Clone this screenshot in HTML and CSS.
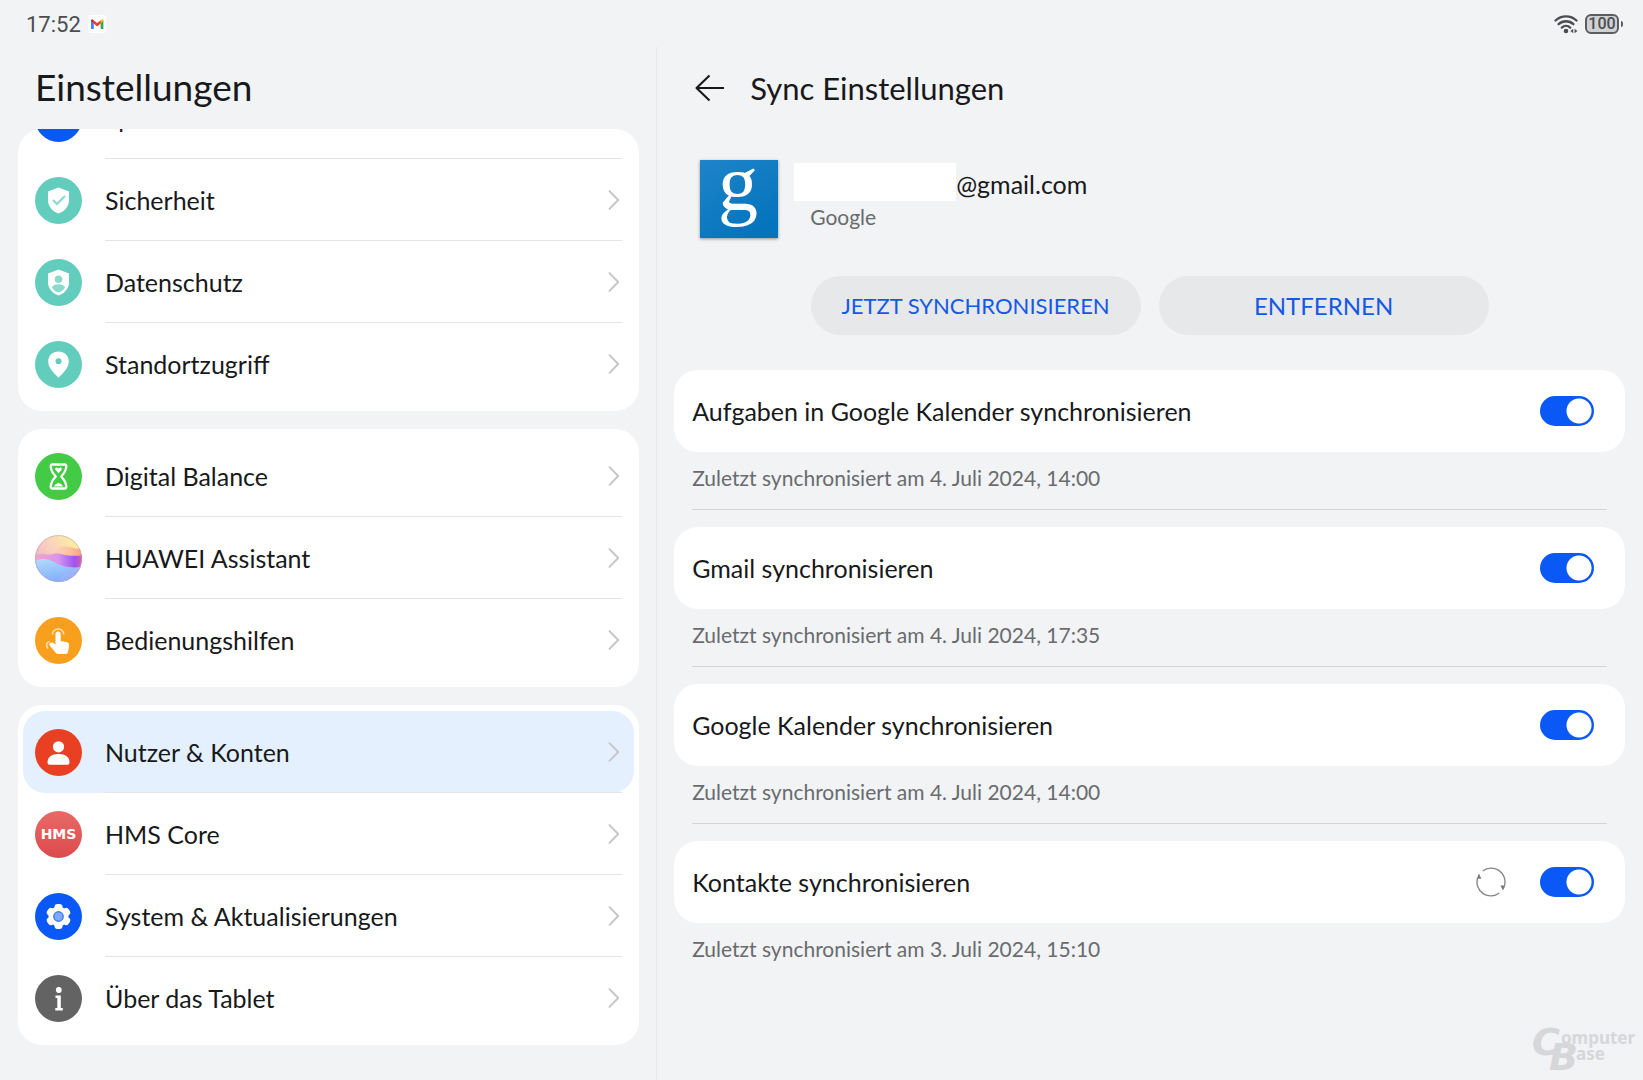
FILE: index.html
```html
<!DOCTYPE html>
<html lang="de">
<head>
<meta charset="utf-8">
<meta name="viewport" content="width=device-width, initial-scale=1">
<title>Einstellungen</title>
<link rel="stylesheet" href="styles.css">
</head>
<body>
<svg class="defs" width="0" height="0" aria-hidden="true">
  <symbol id="chevron" viewBox="0 0 12 20"><path d="M1.500 1.200 10.200 10 1.500 18.800" fill="none" stroke="#c4c6c8" stroke-width="1.900" stroke-linecap="round" stroke-linejoin="round"/></symbol>
</svg>

<header class="status">
  <div class="status-side">
    <time>17:52</time>
    <svg class="gmail" viewBox="0 0 18 18" aria-label="Gmail">
      <rect width="18" height="18" rx="3" fill="#fff"/>
      <path d="M3 5v9h2.800V7.200z" fill="#4285f4"/>
      <path d="M15.400 5v9h-2.800V7.200z" fill="#34a853"/>
      <path d="M12.600 5.400 14 4.200q1.400-.2 1.400 1.500l-2.800 2.800z" fill="#fbbc04"/>
      <path d="M5.800 5.400 4.400 4.200Q3 4 3 5.700l2.800 2.800z" fill="#c5221f"/>
      <path d="M5.600 5.200 9.200 8l3.600-2.800v3.300L9.200 11.400 5.600 8.500z" fill="#ea4335"/>
    </svg>
  </div>
  <div class="status-side">
    <svg class="wifi" viewBox="0 0 24 20" aria-label="WLAN">
      <g fill="none" stroke="#4b4d50" stroke-width="2.300" stroke-linecap="round">
        <path d="M1.500 6.500a15.500 15.500 0 0 1 21 0"/>
        <path d="M4.600 10.200a10.800 10.800 0 0 1 14.800 0"/>
        <path d="M7.800 13.600a6.200 6.200 0 0 1 8.400 0"/>
      </g>
      <circle cx="12" cy="17" r="2.300" fill="#4b4d50"/>
      <path d="m16.500 17 2.700-2.300v4.600zM23.300 17l-2.700-2.300v4.600z" fill="#4b4d50"/>
    </svg>
    <div class="battery"><span>100</span></div>
  </div>
</header>

<div class="panes">
  <nav class="side" aria-label="Einstellungen">
    <h1>Einstellungen</h1>
    <ul class="card">
      <li class="clipped"><a class="row" href="#"><span class="dot blue"></span><span class="row-body">Speicher</span></a></li>
      <li><a class="row" href="#">
        <svg class="icon" viewBox="0 0 47 47"><circle cx="23.500" cy="23.500" r="23.500" fill="#62cdbd"/><path d="M23.500 10.500 34 14.500V23c0 6.500-4.300 11.300-10.500 13.500C17.300 34.300 13 29.500 13 23v-8.500z" fill="#fff"/><path d="m18 23 4 4 8-8" fill="none" stroke="#8adacd" stroke-width="2.200"/></svg>
        <span class="row-body">Sicherheit<svg class="chev"><use href="#chevron"/></svg></span></a></li>
      <li><a class="row" href="#">
        <svg class="icon" viewBox="0 0 47 47"><circle cx="23.500" cy="23.500" r="23.500" fill="#62cdbd"/><path d="M23.500 10.500 34 14.500V23c0 6.500-4.300 11.300-10.500 13.500C17.300 34.300 13 29.500 13 23v-8.500z" fill="#fff"/><circle cx="23.500" cy="20.300" r="3.800" fill="#8adacd"/><path d="M17 28.600c1.300-4.400 11.700-4.400 13 0q-2.200 4-6.500 5-4.300-1-6.500-5z" fill="#8adacd"/></svg>
        <span class="row-body">Datenschutz<svg class="chev"><use href="#chevron"/></svg></span></a></li>
      <li><a class="row" href="#">
        <svg class="icon" viewBox="0 0 47 47"><circle cx="23.500" cy="23.500" r="23.500" fill="#62cdbd"/><path d="M23.500 10.500c6 0 10.300 4.300 10.300 10 0 6.200-5.300 11-10.300 16.300-5-5.300-10.300-10.100-10.300-16.300 0-5.700 4.300-10 10.300-10z" fill="#fff"/><circle cx="23.500" cy="20.300" r="3" fill="#62cdbd"/></svg>
        <span class="row-body">Standortzugriff<svg class="chev"><use href="#chevron"/></svg></span></a></li>
    </ul>
    <ul class="card">
      <li><a class="row" href="#">
        <svg class="icon" viewBox="0 0 47 47"><circle cx="23.500" cy="23.500" r="23.500" fill="#43cb46"/><path d="M17.500 11.500h12q2 0 1.800 2c-.4 5-2.300 7-5 10 2.700 3 4.600 5 5 10q.2 2-1.800 2h-12q-2 0-1.800-2c.4-5 2.300-7 5-10-2.700-3-4.600-5-5-10q-.2-2 1.800-2z" fill="none" stroke="#fff" stroke-width="2.300" stroke-linejoin="round"/><path d="m23.500 20.300-3.200-3.500q-.6-2.400 1.500-2.300l1.700 1 1.700-1q2.100-.1 1.500 2.300zM18.800 33.500q.8-2 4.700-3.800 3.900 1.800 4.700 3.800z" fill="#fff"/></svg>
        <span class="row-body">Digital Balance<svg class="chev"><use href="#chevron"/></svg></span></a></li>
      <li><a class="row" href="#">
        <svg class="icon" viewBox="0 0 47 47">
          <defs>
            <clipPath id="orb"><circle cx="23.500" cy="23.500" r="23.500"/></clipPath>
            <linearGradient id="sky" x1="0" y1=".6" x2=".8" y2="0"><stop offset="0" stop-color="#f5b3c6"/><stop offset=".5" stop-color="#fad2bd"/><stop offset="1" stop-color="#fdf09c"/></linearGradient>
            <linearGradient id="peach" x1="0" x2="1"><stop offset="0" stop-color="#fbd7cf" stop-opacity=".2"/><stop offset="1" stop-color="#fb9f7c"/></linearGradient>
            <linearGradient id="violet" x1="0" x2="1"><stop offset="0" stop-color="#f2a5c8"/><stop offset=".5" stop-color="#d794ee"/><stop offset=".85" stop-color="#9a55ee"/><stop offset="1" stop-color="#dd5fa8"/></linearGradient>
            <linearGradient id="sea" x1="0" y1="0" x2=".4" y2="1"><stop offset="0" stop-color="#b4dcfb"/><stop offset="1" stop-color="#7fb0fb"/></linearGradient>
          </defs>
          <g clip-path="url(#orb)">
            <rect width="47" height="47" fill="url(#sky)"/>
            <path d="M12 22C21 18 21 11 30 11.500s11 4 17 1V26H12z" fill="url(#peach)"/>
            <path d="M0 20c8-3 12 1 18-1 8-2 14 4 29 1v16H0z" fill="url(#violet)"/>
            <path d="M0 25.500c8-3 14-1.500 20 2s14 6 27 4.500v15H0z" fill="url(#sea)"/>
            <path d="M24 47c2-8 8-14 23-15v15z" fill="#a9b2fb" opacity=".5"/>
          </g>
          <circle cx="23.500" cy="23.500" r="23" fill="none" stroke="#b6a5c8" stroke-opacity=".6"/>
        </svg>
        <span class="row-body">HUAWEI Assistant<svg class="chev"><use href="#chevron"/></svg></span></a></li>
      <li><a class="row" href="#">
        <svg class="icon" viewBox="0 0 47 47"><circle cx="23.500" cy="23.500" r="23.500" fill="#f8a01d"/><path d="M20.500 17q0-2.600 2.600-2.600t2.600 2.600v7l6.300 1.200q2.300.5 2.100 2.800l-1 6.500q-.5 2.500-2.800 2.500h-6.800q-1.800 0-3-1.500l-6-7.300q-.8-1.200.4-2.200 1.500-1 3-.2l2.600 1.700z" fill="#fff"/><path d="M17.400 17.600a5.700 5.700 0 1 1 11.400 0M14.500 24.500q-3.500 1.200-2.800 4.800 .3 1.200 1.300 2.300" fill="none" stroke="#fde0b3" stroke-width="1.500"/></svg>
        <span class="row-body">Bedienungshilfen<svg class="chev"><use href="#chevron"/></svg></span></a></li>
    </ul>
    <ul class="card">
      <li><a class="row current" href="#" aria-current="page">
        <svg class="icon" viewBox="0 0 47 47"><circle cx="23.500" cy="23.500" r="23.500" fill="#e94023"/><circle cx="23.500" cy="17.800" r="5.600" fill="#fff"/><path d="M12.500 33.500c0-5.500 4-8.500 11-8.500s11 3 11 8.500q0 2.300-2 2.300h-18q-2 0-2-2.300z" fill="#fff"/></svg>
        <span class="row-body">Nutzer &amp; Konten<svg class="chev"><use href="#chevron"/></svg></span></a></li>
      <li><a class="row" href="#">
        <span class="dot hms">HMS</span>
        <span class="row-body">HMS Core<svg class="chev"><use href="#chevron"/></svg></span></a></li>
      <li><a class="row" href="#">
        <svg class="icon" viewBox="0 0 47 47"><circle cx="23.500" cy="23.500" r="23.500" fill="#0a59f7"/><g fill="#fff"><circle cx="23.500" cy="23.500" r="10"/><g id="cog"><rect x="19.500" y="11" width="8" height="25" rx="3"/></g><use href="#cog" transform="rotate(60 23.500 23.500)"/><use href="#cog" transform="rotate(120 23.500 23.500)"/></g><circle cx="23.500" cy="23.500" r="4.700" fill="#7fa9fb" stroke="#3f7bf5" stroke-width="1.400"/></svg>
        <span class="row-body">System &amp; Aktualisierungen<svg class="chev"><use href="#chevron"/></svg></span></a></li>
      <li><a class="row" href="#">
        <svg class="icon" viewBox="0 0 47 47"><circle cx="23.500" cy="23.500" r="23.500" fill="#636363"/><circle cx="23.800" cy="15" r="2.900" fill="#fff"/><path d="M20.500 20.500h5.300v12.600h2v2.500h-7.500v-2.500h2v-10h-1.800z" fill="#fff"/></svg>
        <span class="row-body">Über das Tablet<svg class="chev"><use href="#chevron"/></svg></span></a></li>
    </ul>
  </nav>

  <main class="detail">
    <div class="titlebar">
      <button class="back" type="button" aria-label="Zurück"><svg viewBox="0 0 30 28"><path d="M14.500 1.500 1.500 14l13 12.500M1.500 14H29" fill="none" stroke="#18191b" stroke-width="2.100" stroke-linejoin="round"/></svg></button>
      <h2>Sync Einstellungen</h2>
    </div>

    <section class="account">
      <svg class="logo" viewBox="0 0 78 78" aria-label="Google"><defs><linearGradient id="gblue" x1="0" y1="0" x2=".6" y2="1"><stop offset="0" stop-color="#1f84c9"/><stop offset="1" stop-color="#0474bd"/></linearGradient></defs><rect width="78" height="78" fill="url(#gblue)"/><text class="logo-g" x="38" y="50" text-anchor="middle">g</text></svg>
      <div class="account-text">
        <div class="mail"><span class="mask"></span><span class="domain">@gmail.com</span></div>
        <div class="provider">Google</div>
      </div>
    </section>

    <div class="actions">
      <button class="small" type="button">JETZT SYNCHRONISIEREN</button>
      <button type="button">ENTFERNEN</button>
    </div>

    <section class="sync">
      <label class="option"><span>Aufgaben in Google Kalender synchronisieren</span><input class="switch" type="checkbox" role="switch" checked></label>
      <p>Zuletzt synchronisiert am 4. Juli 2024, 14:00</p>
    </section>
    <section class="sync">
      <label class="option"><span>Gmail synchronisieren</span><input class="switch" type="checkbox" role="switch" checked></label>
      <p>Zuletzt synchronisiert am 4. Juli 2024, 17:35</p>
    </section>
    <section class="sync">
      <label class="option"><span>Google Kalender synchronisieren</span><input class="switch" type="checkbox" role="switch" checked></label>
      <p>Zuletzt synchronisiert am 4. Juli 2024, 14:00</p>
    </section>
    <section class="sync">
      <label class="option"><span>Kontakte synchronisieren</span>
        <svg class="spin" viewBox="0 0 30 30"><g fill="none" stroke="#85878a" stroke-width="1.400"><path d="M6.700 4A13.800 13.800 0 0 1 28.500 18.500"/><path d="M23.300 26A13.800 13.800 0 0 1 1.500 11.500"/></g><path d="m3 6.500 2.300 5.300H.7zM27 23.500l-2.600-5h5z" fill="#77797c"/></svg>
        <input class="switch" type="checkbox" role="switch" checked></label>
      <p>Zuletzt synchronisiert am 3. Juli 2024, 15:10</p>
    </section>
  </main>
</div>

<svg class="watermark" viewBox="0 0 104 50" aria-label="ComputerBase">
  <text class="wm-big" x="-1" y="31">C</text>
  <text class="wm-small" x="28" y="20">omputer</text>
  <text class="wm-big" x="16" y="46">B</text>
  <text class="wm-small" x="43" y="36">ase</text>
</svg>
</body>
</html>
```

FILE: styles.css
```css
* { box-sizing: border-box; }

body {
  margin: 0;
  min-height: 100vh;
  display: flex;
  flex-direction: column;
  background: #f1f3f5;
  color: #18191b;
  font-family: "Lato", "Noto Sans", sans-serif;
  font-size: 25px;
  line-height: 32px;
}

.defs { position: absolute; }

h1, h2, p, ul { margin: 0; padding: 0; font-weight: 400; }
ul { list-style: none; }
a { color: inherit; text-decoration: none; }
button { font: inherit; border: 0; cursor: pointer; }

/* Status bar */
.status {
  height: 47px;
  padding: 0 20px 0 26px;
  display: flex;
  justify-content: space-between;
  align-items: center;
  color: #4b4d50;
}
.status-side { display: flex; align-items: center; gap: 7px; }
time { padding-top: 2px; font-family: "Roboto", sans-serif; font-size: 22px; }
.gmail { width: 18px; height: 18px; }
.wifi { width: 24px; height: 20px; }
.battery {
  position: relative;
  width: 34px;
  height: 20px;
  margin-right: 4px;
  border: 2px solid #5b5d60;
  border-radius: 6px;
  background: #cfd1d3;
  font: 500 16px/16px "Roboto", sans-serif;
  text-align: center;
}
.battery::after {
  content: "";
  position: absolute;
  left: 34px;
  top: 5px;
  width: 2px;
  height: 6px;
  border-radius: 0 2px 2px 0;
  background: #5b5d60;
}

.panes { flex: 1; display: grid; grid-template-columns: 2fr 3fr; }

/* Category list */
.side {
  padding: 0 17px 35px 18px;
  border-right: 1px solid #e6e8ea;
  display: flex;
  flex-direction: column;
  gap: 18px;
}
h1 {
  height: 82px;
  margin-bottom: -18px;
  padding-left: 17px;
  font-size: 37px;
  line-height: 80px;
}
.card {
  padding: 6px 5px;
  border-radius: 24px;
  background: #fff;
}
.card:has(.clipped) { padding-top: 0; }
.clipped {
  height: 30px;
  display: flex;
  flex-direction: column;
  justify-content: flex-end;
  overflow: hidden;
}
.row {
  height: 82px;
  flex-shrink: 0;
  padding: 0 12px;
  display: flex;
  align-items: center;
  gap: 23px;
  border-radius: 22px;
}
.row.current { background: #e4f0fe; }
.icon, .dot { width: 47px; height: 47px; flex: none; }
.dot { border-radius: 50%; }
.blue { background: #0a59f7; }
.hms {
  background: linear-gradient(#e86a66, #dc4a4e);
  color: #fff;
  font: 700 14px/47px "DejaVu Sans", sans-serif;
  text-align: center;
}
.row-body {
  flex: 1;
  align-self: stretch;
  padding-right: 2px;
  display: flex;
  align-items: center;
  justify-content: space-between;
  border-bottom: 1px solid #e3e4e6;
}
.card li:last-child .row-body { border-bottom-color: transparent; }
.chev { width: 12px; height: 20px; }

/* Detail pane */
.detail { padding: 0 18px 36px 17px; }
.titlebar {
  height: 82px;
  padding-left: 21px;
  display: flex;
  align-items: center;
  gap: 25px;
}
.back { width: 30px; height: 28px; padding: 0; background: none; }
.back svg { display: block; width: 30px; height: 28px; }
h2 { font-size: 31px; line-height: 40px; }

.account {
  margin-top: 31px;
  padding-left: 26px;
  display: flex;
  gap: 16px;
}
.logo { width: 78px; height: 78px; flex: none; box-shadow: 0 1px 3px #0006; }
.logo-g { font: 80px "Liberation Serif", serif; fill: #fff; }
.mail { margin-top: 3px; display: flex; align-items: flex-end; line-height: 34px; }
.mask { width: 162px; height: 38px; background: #fff; }
.provider { padding-left: 16px; color: #696b6e; font-size: 21px; }

.actions {
  margin-top: 38px;
  display: flex;
  justify-content: center;
  gap: 18px;
}
.actions button {
  width: 330px;
  height: 59px;
  padding: 0;
  border-radius: 30px;
  background: #e6e8ea;
  color: #1558e6;
  font-size: 24px;
}
.actions .small { font-size: 22px; }

.sync { padding-bottom: 17px; }
.actions + .sync { margin-top: 35px; }
.option {
  height: 82px;
  padding: 0 31px 0 18px;
  display: flex;
  align-items: center;
  gap: 34px;
  border-radius: 24px;
  background: #fff;
}
.option span { flex: 1; }
.spin { width: 30px; height: 30px; }
.switch {
  appearance: none;
  width: 54px;
  height: 30px;
  margin: 0;
  border-radius: 15px;
  background: radial-gradient(circle at 39px 15px, #fff 12px, #0a59f7 13px);
}
.sync p {
  height: 58px;
  margin: 0 18px;
  border-bottom: 1px solid #d2d4d6;
  color: #696b6e;
  font-size: 21px;
  line-height: 52px;
}
.sync:last-child p { border-bottom: 0; }

/* Site mark over the lower right corner */
.watermark {
  position: absolute;
  right: 6px;
  bottom: 6px;
  width: 104px;
  height: 50px;
  overflow: visible;
  fill: #d5d7d9;
}
.wm-big { font: italic 700 38px "DejaVu Sans", sans-serif; }
.wm-small { font: 700 17px "Noto Sans", sans-serif; }
```
